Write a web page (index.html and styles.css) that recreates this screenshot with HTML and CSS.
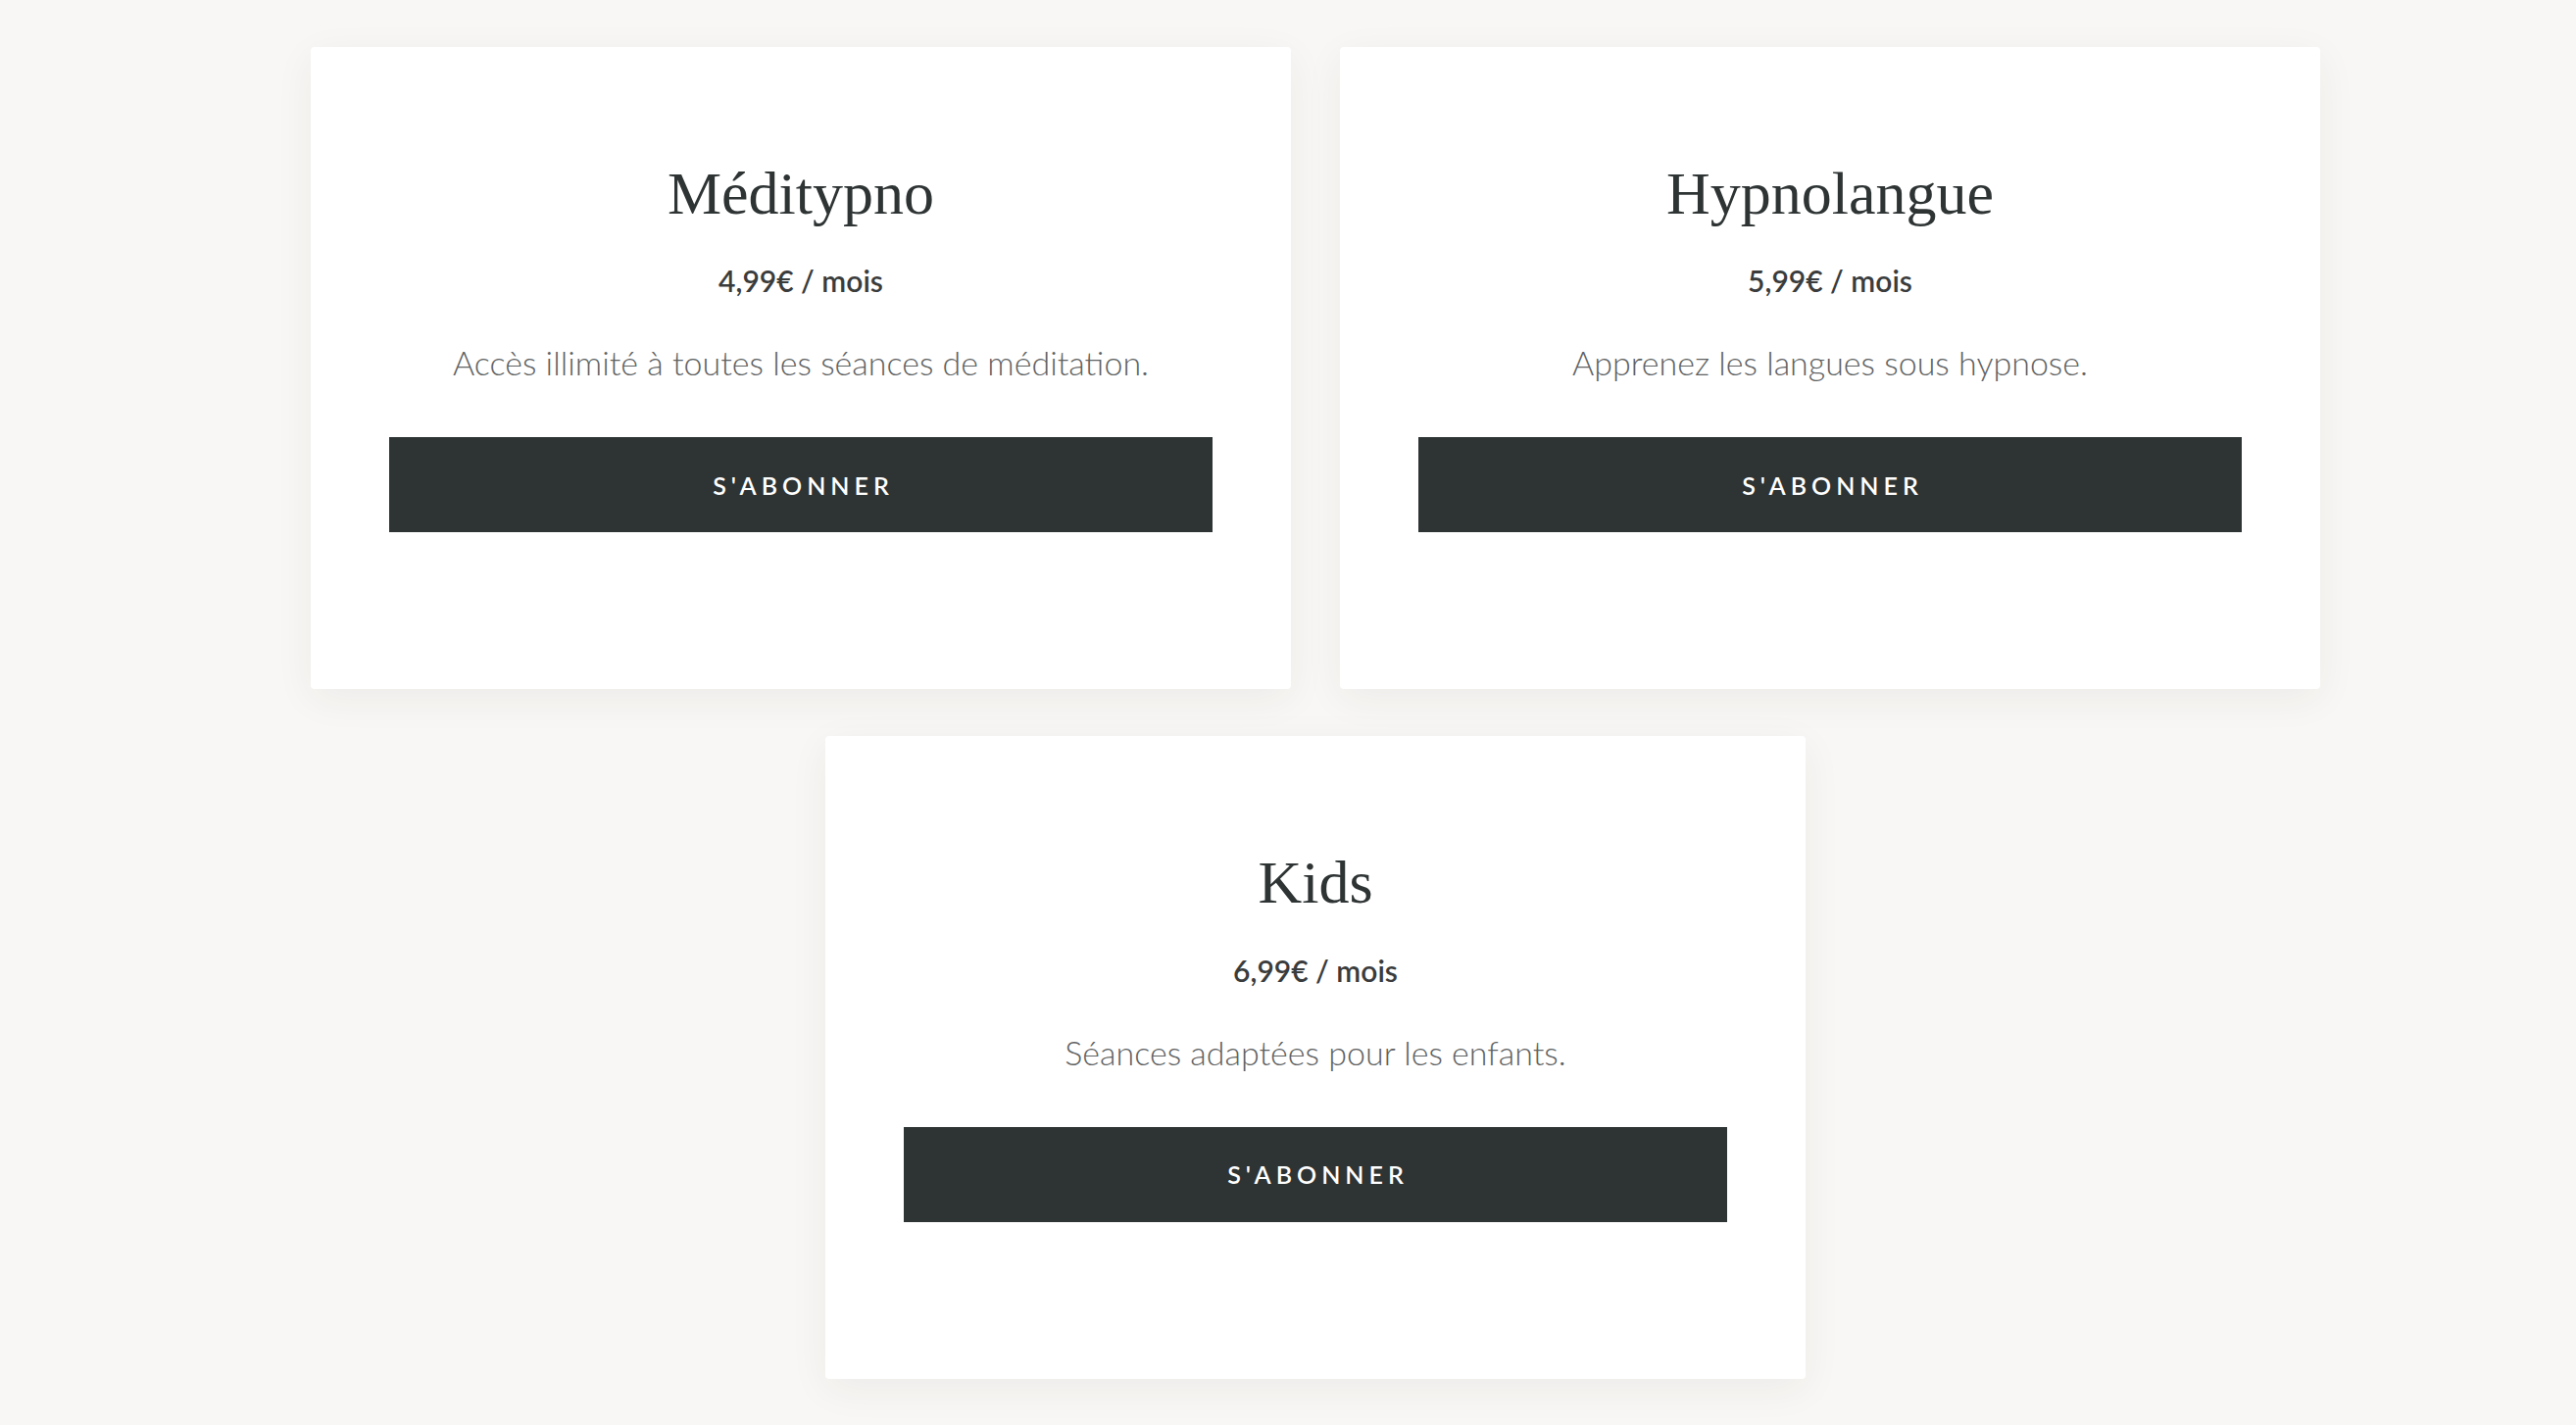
FILE: index.html
```html
<!DOCTYPE html>
<html lang="fr">
<head>
<meta charset="utf-8">
<title>Abonnements</title>
<link rel="stylesheet" href="styles.css">
</head>
<body>
<main class="plans">
  <section class="card">
    <h2 class="card-title">Méditypno</h2>
    <p class="card-price">4,99€ / mois</p>
    <p class="card-desc">Accès illimité à toutes les séances de méditation.</p>
    <button class="card-btn">S'abonner</button>
  </section>
  <section class="card">
    <h2 class="card-title">Hypnolangue</h2>
    <p class="card-price">5,99€ / mois</p>
    <p class="card-desc">Apprenez les langues sous hypnose.</p>
    <button class="card-btn">S'abonner</button>
  </section>
  <section class="card">
    <h2 class="card-title">Kids</h2>
    <p class="card-price">6,99€ / mois</p>
    <p class="card-desc">Séances adaptées pour les enfants.</p>
    <button class="card-btn">S'abonner</button>
  </section>
</main>
</body>
</html>
```

FILE: styles.css
```css
* { box-sizing: border-box; }
html, body {
  margin: 0;
  padding: 0;
  background: #f8f7f5;
}
body {
  font-family: "Lato", "Liberation Sans", sans-serif;
}
.plans {
  display: flex;
  flex-wrap: wrap;
  justify-content: center;
  gap: 48px 50px;
  padding: 48px 0 50px 56px;
}
.card {
  width: 1000px;
  background: #ffffff;
  border-radius: 4px;
  box-shadow: 0 10px 40px rgba(60, 50, 40, 0.06);
  padding: 112px 80px 160px;
  display: flex;
  flex-direction: column;
  align-items: stretch;
  text-align: center;
}
.card-title {
  margin: 0;
  font-family: "Liberation Serif", "DejaVu Serif", serif;
  font-weight: 400;
  font-size: 62px;
  line-height: 1.2;
  color: #2e3333;
}
.card-price {
  margin: 34px 0 0;
  font-size: 30px;
  line-height: 1.2;
  font-weight: 600;
  color: #3a3c3c;
}
.card-desc {
  margin: 45px 0 0;
  font-size: 34px;
  line-height: 42px;
  font-weight: 300;
  color: #606262;
}
.card-btn {
  margin-top: 55px;
  height: 97px;
  border: 0;
  border-radius: 0;
  background: #2e3333;
  color: #ffffff;
  font-family: "Lato", "Liberation Sans", sans-serif;
  font-size: 25px;
  font-weight: 600;
  letter-spacing: 0.2em;
  text-transform: uppercase;
  cursor: pointer;
  padding: 0 0 0 0.2em;
}
```
